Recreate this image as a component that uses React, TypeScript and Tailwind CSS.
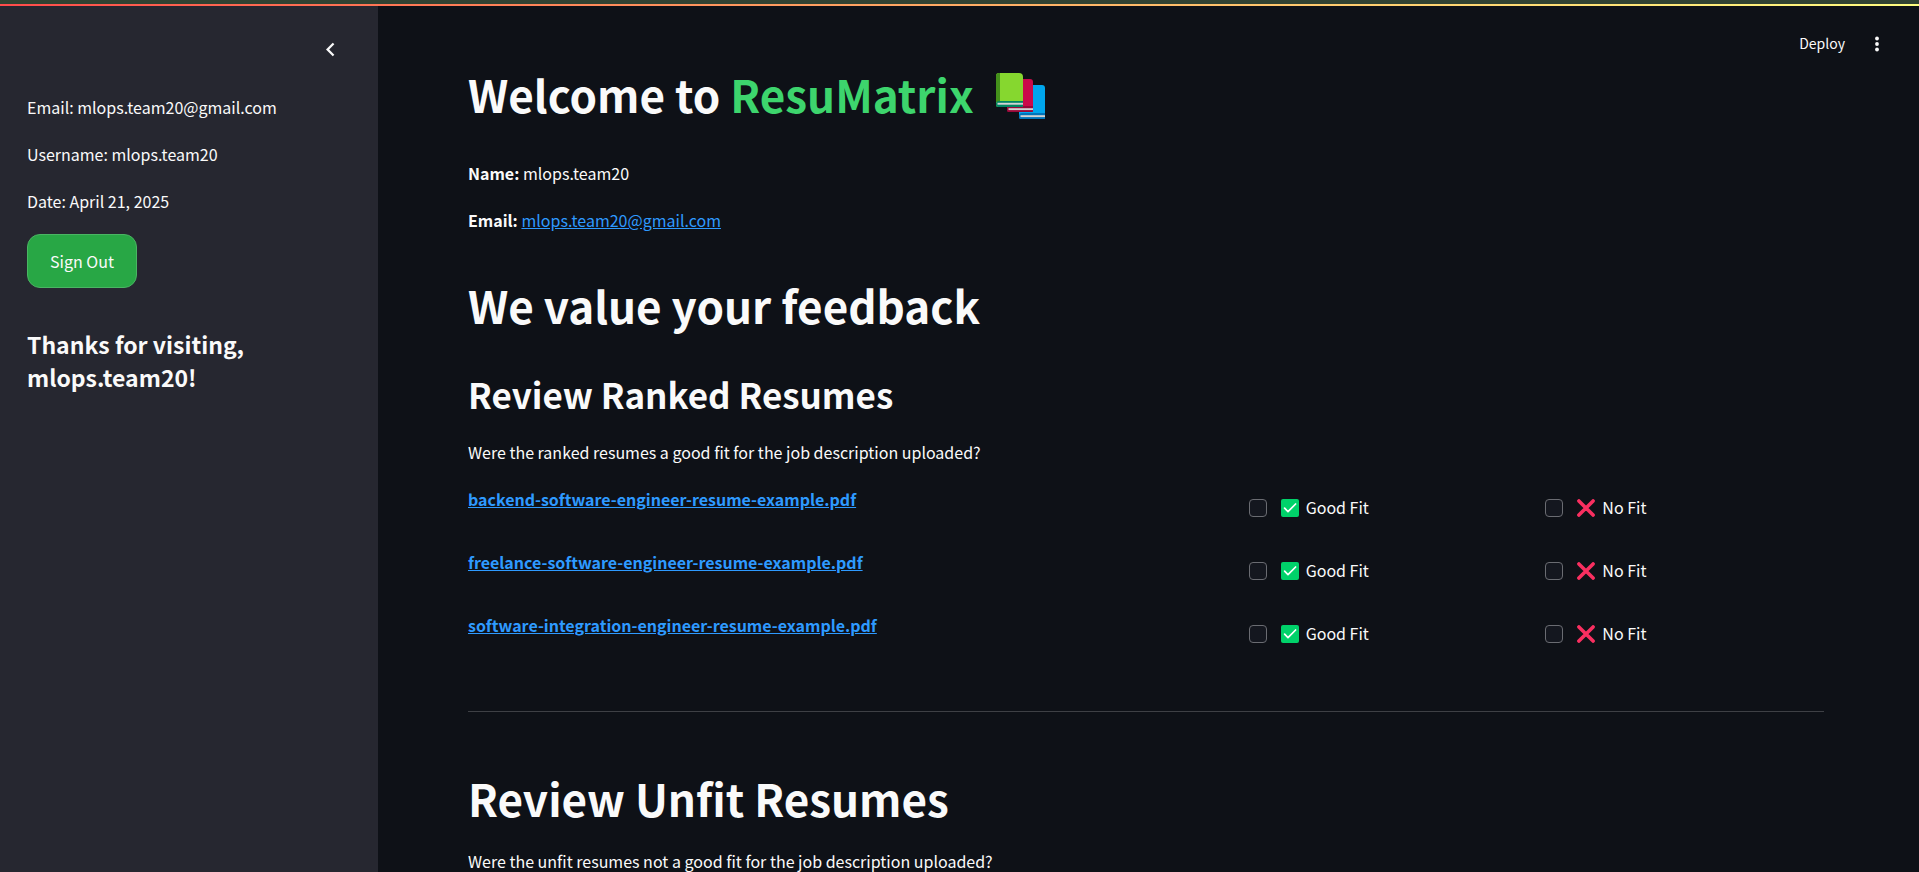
import React from "react";

const resumes = [
  "backend-software-engineer-resume-example.pdf",
  "freelance-software-engineer-resume-example.pdf",
  "software-integration-engineer-resume-example.pdf",
];

function BooksIcon() {
  return (
    <svg viewBox="0 0 50 46" className="h-[46px] w-[50px]" aria-hidden="true">
      <path d="M23 16a4 4 0 0 1 4-4h19a3 3 0 0 1 3 3v30a1 1 0 0 1-1 1H25a2 2 0 0 1-2-2z" fill="#00a6ed" />
      <path d="M23 43a3 3 0 0 1 3-3h23v5a1 1 0 0 1-1 1H25a2 2 0 0 1-2-2z" fill="#0074ba" />
      <path d="M24.5 42.2H49v1.9H24.5z" fill="#d3d3d3" />
      <path d="M11 9a3 3 0 0 1 3-3h20a3 3 0 0 1 3 3v29a1 1 0 0 1-1 1H13a2 2 0 0 1-2-2z" fill="#ca0b4a" />
      <path d="M11 36a3 3 0 0 1 3-3h23v5a1 1 0 0 1-1 1H13a2 2 0 0 1-2-2z" fill="#990838" />
      <path d="M12.5 35.2H37v1.9H12.5z" fill="#d3d3d3" />
      <path d="M0 3a3 3 0 0 1 3-3h20a4 4 0 0 1 4 4v28a2 2 0 0 1-2 2H2a2 2 0 0 1-2-2z" fill="#86d72f" />
      <path d="M0 3a3 3 0 0 1 3-3h1v29H0z" fill="#44911b" />
      <path d="M0 31a3 3 0 0 1 3-3h24v5a1 1 0 0 1-1 1H2a2 2 0 0 1-2-2z" fill="#008463" />
      <path d="M1.5 29.8H27v1.9H1.5z" fill="#d3d3d3" />
    </svg>
  );
}

function CheckEmoji() {
  return (
    <svg viewBox="0 0 18 18" className="size-[18px]" aria-hidden="true">
      <rect width="18" height="18" rx="2" fill="#00d26a" />
      <path d="M3.6 9.2 7 12.6 14.6 5" fill="none" stroke="#fff" strokeWidth="1.7" strokeLinecap="round" strokeLinejoin="round" />
    </svg>
  );
}

function CrossEmoji() {
  return (
    <svg viewBox="0 0 18 18" className="size-[18px]" aria-hidden="true">
      <path d="M1.9 1.9 16.1 16.1M16.1 1.9 1.9 16.1" fill="none" stroke="#f92f60" strokeWidth="3.6" strokeLinecap="round" />
    </svg>
  );
}

function Choice({ icon, text }: { icon: React.ReactNode; text: string }) {
  return (
    <label className="flex h-[29px] items-center">
      <input
        type="checkbox"
        className="size-[18px] appearance-none rounded-[4px] border border-[#6a6c72] bg-[#14171f] checked:bg-[#ff4b4b]"
      />
      <span className="mr-[7px] ml-[14px]">{icon}</span>
      {text}
    </label>
  );
}

export default function App() {
  return (
    <div className="flex h-screen flex-col bg-[#0e1117] font-['Noto_Sans_CJK_SC',sans-serif] text-base leading-[29px] text-[#fafafa]">
      <div className="h-1 shrink-0 bg-[#314232]" />
      <div className="h-0.5 shrink-0 bg-linear-to-r from-[#ff4b4b] to-[#fffd80]" />
      <div className="relative flex min-h-0 flex-1">
        <aside className="w-[378px] shrink-0 bg-[#262730] px-[27px]">
          <div className="flex h-[87px] justify-end pt-[30px] pr-[7px]">
            <button aria-label="Collapse sidebar" className="flex size-[27px] items-center justify-center">
              <svg viewBox="0 0 24 24" className="size-[27px]" fill="currentColor" aria-hidden="true">
                <path d="M15.41 7.41 14 6l-6 6 6 6 1.41-1.41L10.83 12z" />
              </svg>
            </button>
          </div>
          <div className="flex flex-col gap-[18px]">
            <p>Email: mlops.team20@gmail.com</p>
            <p>Username: mlops.team20</p>
            <p>Date: April 21, 2025</p>
          </div>
          <button className="mt-[18px] h-[54px] rounded-[13px] border border-[#4ab563] bg-[#28a745] px-[22px]">
            Sign Out
          </button>
          <h3 className="mt-10 text-[23px] leading-[33px] font-semibold">
            Thanks for visiting,
            <br />
            mlops.team20!
          </h3>
        </aside>

        <main className="min-w-0 flex-1 overflow-y-auto pt-[58px] pr-[95px] pl-[90px] [scrollbar-width:none]">
          <h1 className="flex items-end text-[44px] leading-[60px] font-bold">
            <span>
              Welcome to <span className="text-[#3dd56d]">ResuMatrix</span>
            </span>
            <span className="ml-[22px] pb-[5px] leading-none">
              <BooksIcon />
            </span>
          </h1>
          <div className="mt-[35px] flex flex-col gap-[18px]">
            <p>
              <strong className="font-bold">Name:</strong> mlops.team20
            </p>
            <p>
              <strong className="font-bold">Email:</strong>{" "}
              <a href="mailto:mlops.team20@gmail.com" className="text-[#2e9aff] underline">
                mlops.team20@gmail.com
              </a>
            </p>
          </div>

          <h1 className="mt-10 text-[44px] leading-[60px] font-bold">We value your feedback</h1>
          <h2 className="mt-[35px] text-[35px] leading-[48px] font-semibold">Review Ranked Resumes</h2>
          <p className="mt-5">Were the ranked resumes a good fit for the job description uploaded?</p>

          <div className="mt-[18px] flex flex-col gap-[18px]">
            {resumes.map((name) => (
              <div key={name} className="grid h-[45px] grid-cols-[52fr_19fr_19fr] gap-[18px]">
                <div>
                  <a href="#" className="font-semibold text-[#2e9aff] underline">
                    {name}
                  </a>
                </div>
                <div className="pt-2">
                  <Choice icon={<CheckEmoji />} text="Good Fit" />
                </div>
                <div className="pt-2">
                  <Choice icon={<CrossEmoji />} text="No Fit" />
                </div>
              </div>
            ))}
          </div>

          <hr className="mt-[55px] border-[#3e4045]" />

          <h1 className="mt-14 text-[44px] leading-[60px] font-bold">Review Unfit Resumes</h1>
          <p className="mt-[19px]">Were the unfit resumes not a good fit for the job description uploaded?</p>
        </main>

        <header className="absolute top-6 right-[29px] flex items-center gap-[18px]">
          <button className="text-sm leading-[27px]">Deploy</button>
          <button aria-label="Main menu" className="flex size-[27px] items-center justify-center">
            <svg viewBox="0 0 16 16" className="size-4" fill="currentColor" aria-hidden="true">
              <circle cx="8" cy="2.5" r="1.9" />
              <circle cx="8" cy="8" r="1.9" />
              <circle cx="8" cy="13.5" r="1.9" />
            </svg>
          </button>
        </header>
      </div>
    </div>
  );
}
